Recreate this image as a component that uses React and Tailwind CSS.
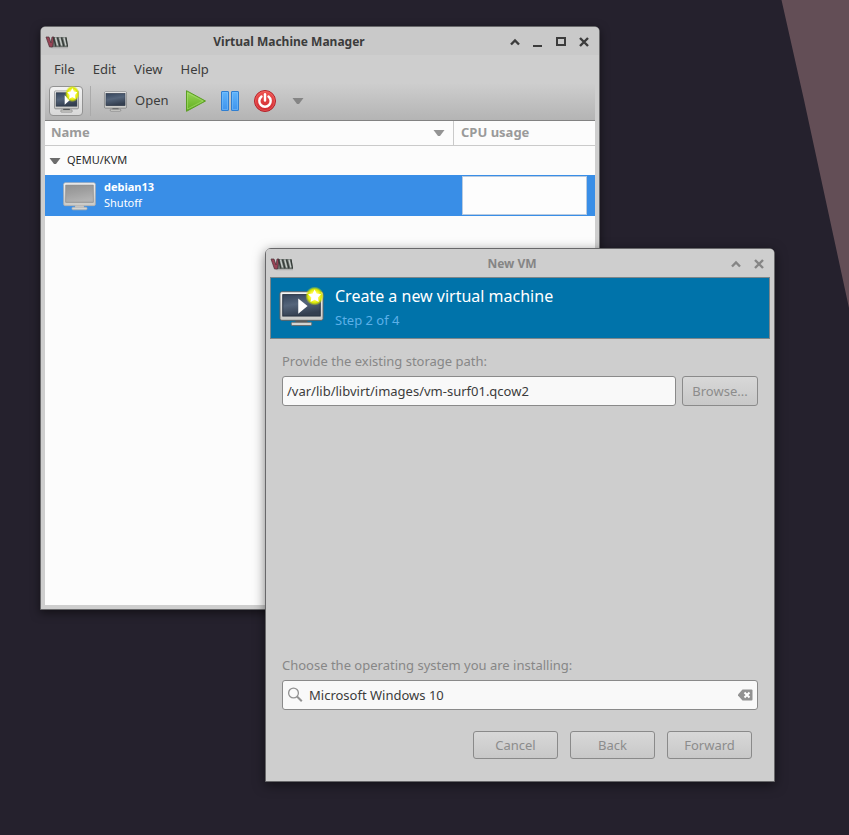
import React from "react";

function LogoVM() {
  return (
    <svg width="24" height="14" viewBox="0 0 24 14" aria-hidden="true">
      <path d="M3 2.500 7 12.500h16" fill="none" stroke="#777" strokeOpacity=".35" strokeWidth="1.500" />
      <path d="M7.500 2h14l1.500 10H7z" fill="#6d736f" />
      <path d="M1 2h3l2 6 1-6h2L7.500 12H4.500z" fill="#9a4456" stroke="#4a3038" strokeWidth=".7" />
      <path d="m8.500 2.500 2.500 9m1.500-9 2.500 9m1.500-9 2.500 9m2-9 1.500 9" stroke="#343a37" strokeWidth="1.200" />
      <path d="m10.500 2.500 2 8m2.200-8 2 8m2.200-8 2 8" stroke="#c9cecb" strokeWidth="1.300" />
    </svg>
  );
}

function Monitor({ id, width, height, play, star, small, off }) {
  return (
    <svg width={width} height={height} viewBox="0 0 48 42" preserveAspectRatio="none" className="overflow-visible" aria-hidden="true">
      <defs>
        <linearGradient id={`${id}-screen`} x1="0" y1="0" x2=".3" y2="1">
          <stop offset="0" stopColor={off ? "#929292" : "#33435a"} />
          <stop offset=".5" stopColor={off ? "#a0a0a0" : "#55657b"} />
          <stop offset="1" stopColor={off ? "#b2b2b2" : "#343f50"} />
        </linearGradient>
        <linearGradient id={`${id}-frame`} x1="0" y1="0" x2="0" y2="1">
          <stop offset="0" stopColor="#f7f7f7" />
          <stop offset="1" stopColor="#c9c9c6" />
        </linearGradient>
        <radialGradient id={`${id}-glow`}>
          <stop offset=".45" stopColor="#fff94a" />
          <stop offset=".72" stopColor="#d9e800" />
          <stop offset="1" stopColor="#d9e800" stopOpacity="0" />
        </radialGradient>
      </defs>
      <path d="M18 34h12l1 5H17z" fill={off ? "#d0d0d0" : "#55585a"} />
      <rect x="13" y="37" width="22" height="3.500" rx="1.500" fill="#d4d4d1" stroke={off ? "#aaa" : "#666"} />
      <rect x="1" y="5" width="46" height="30" rx="2" fill={`url(#${id}-frame)`} stroke={off ? "#b5aea8" : "#5c5e60"} />
      <rect x="4" y="8" width="40" height="22.500" fill={`url(#${id}-screen)`} stroke={off ? "#888" : "#273140"} />
      {play && <path d="M20.500 12v16l10-8z" fill="#fff" />}
      {star && (
        <g transform={small ? "translate(-18 -3.500) scale(1.400)" : undefined}>
          <circle cx="38" cy="9.500" r="10" fill={`url(#${id}-glow)`} />
          <path d="m38 2.500 2.200 4.300 4.800.7-3.500 3.400.9 4.800-4.400-2.300-4.400 2.300.9-4.800L31 7.500l4.800-.7z" fill="#fff" />
        </g>
      )}
    </svg>
  );
}

function PlayIcon() {
  return (
    <svg width="22" height="22" viewBox="0 0 22 22" aria-hidden="true">
      <defs>
        <linearGradient id="go" x1="0" y1="0" x2="0" y2="1">
          <stop offset="0" stopColor="#9ad65a" />
          <stop offset="1" stopColor="#5fae1c" />
        </linearGradient>
      </defs>
      <path d="M1.500 .7v20.600l19-10.300z" fill="url(#go)" stroke="#5a9e22" strokeLinejoin="round" />
      <path d="M2.500 3v16l15.500-8z" fill="none" stroke="#b4e47f" strokeOpacity=".5" />
    </svg>
  );
}

function PauseIcon() {
  return (
    <svg width="20" height="22" viewBox="0 0 20 22" aria-hidden="true">
      <defs>
        <linearGradient id="hold" x1="0" y1="0" x2="0" y2="1">
          <stop offset="0" stopColor="#5fb4fb" />
          <stop offset="1" stopColor="#3f94ee" />
        </linearGradient>
      </defs>
      <g fill="url(#hold)" stroke="#2f7fd2">
        <rect x="1.500" y="1.500" width="7" height="19" rx=".5" />
        <rect x="11.500" y="1.500" width="7" height="19" rx=".5" />
      </g>
      <path d="M2.500 2.500h5v17h-5zM12.500 2.500h5v17h-5z" fill="none" stroke="#8ccbff" strokeOpacity=".4" />
    </svg>
  );
}

function PowerIcon() {
  return (
    <svg width="24" height="24" viewBox="0 0 24 24" aria-hidden="true">
      <defs>
        <linearGradient id="halt" x1="0" y1="0" x2="0" y2="1">
          <stop offset="0" stopColor="#ef5350" />
          <stop offset="1" stopColor="#cf2a32" />
        </linearGradient>
      </defs>
      <circle cx="12" cy="12" r="10.500" fill="url(#halt)" stroke="#b5222b" />
      <circle cx="12" cy="12" r="9.500" fill="none" stroke="#ff8c82" strokeOpacity=".35" />
      <path d="M8.500 7.500a5.700 5.700 0 1 0 7 0" fill="none" stroke="#fff" strokeWidth="2.400" strokeLinecap="round" />
      <path d="M12 5.300v6.200" stroke="#fff" strokeWidth="2.400" strokeLinecap="round" />
    </svg>
  );
}

function Caret({ className }) {
  return (
    <svg width="12" height="8" viewBox="0 0 12 8" className={className} aria-hidden="true">
      <path d="M.5 1h11L7 7H5z" fill="currentColor" />
    </svg>
  );
}

const glyphs = {
  shade: <path d="m2 8.500 4-4 4 4" fill="none" stroke="currentColor" strokeWidth="2.400" />,
  minimize: <path d="M1 9h9v2H1z" fill="currentColor" />,
  maximize: <path d="M2 2h8v7H2z" fill="none" stroke="currentColor" strokeWidth="2" />,
  close: <path d="m2 2 8 8m0-8-8 8" fill="none" stroke="currentColor" strokeWidth="2.400" />,
};

function WindowTitle({ title, active, controls }) {
  return (
    <header
      className={`flex h-7 shrink-0 items-center rounded-t pt-0.5 pr-[9px] pl-1 ${
        active ? "bg-[#c9c9c9] text-[#3c3c3c]" : "bg-[#cecece] text-[#858585]"
      }`}
    >
      <LogoVM />
      <h1 className="flex-1 text-center text-xs font-bold">{title}</h1>
      <div className="flex gap-[11px]">
        {controls.map((name) => (
          <button key={name} type="button" aria-label={name}>
            <svg width="12" height="12" viewBox="0 0 12 12" aria-hidden="true">
              {glyphs[name]}
            </svg>
          </button>
        ))}
      </div>
    </header>
  );
}

function ManagerWindow() {
  return (
    <section className="absolute top-[26px] left-10 flex h-[584px] w-[560px] flex-col rounded-t-md border border-[#68686a] bg-[#cecece] shadow-[0_3px_10px_rgba(0,0,0,0.5)]">
      <WindowTitle title="Virtual Machine Manager" active controls={["shade", "minimize", "maximize", "close"]} />
      <nav className="flex h-7 shrink-0 items-center gap-[18px] pt-0.5 pl-[13px]">
        {["File", "Edit", "View", "Help"].map((name) => (
          <button key={name} type="button">
            {name}
          </button>
        ))}
      </nav>
      <div className="mx-1 flex h-[38px] shrink-0 items-center border-b border-[#828282] bg-linear-to-b from-[#cecece] to-[#b4b4b4] pb-0.5 pl-1">
        <button
          type="button"
          aria-label="Create a new virtual machine"
          className="flex h-[30px] w-[34px] items-center justify-center rounded-sm border border-[#929292] bg-linear-to-b from-[#f2f2f2] to-[#d8d8d8]"
        >
          <Monitor id="new" width={25} height={25} play star small />
        </button>
        <span className="mx-[7px] h-[30px] w-px bg-[#aaaaaa]" />
        <button type="button" className="ml-0.5 flex items-center gap-2 px-1">
          <Monitor id="open" width={23} height={23} />
          Open
        </button>
        <button type="button" aria-label="Run" className="ml-3">
          <PlayIcon />
        </button>
        <button type="button" aria-label="Pause" className="ml-[13px]">
          <PauseIcon />
        </button>
        <button type="button" aria-label="Shut down" className="ml-[13px]">
          <PowerIcon />
        </button>
        <button type="button" aria-label="Shut down options" className="ml-[15px]">
          <Caret className="text-[#858585]" />
        </button>
      </div>
      <div className="mx-1 mb-1 flex-1 bg-[#fcfcfc]">
        <table className="w-full table-fixed border-separate border-spacing-0 text-left">
          <colgroup>
            <col />
            <col className="w-[141px]" />
          </colgroup>
          <thead className="text-[#9a9a9a]">
            <tr className="h-[25px]">
              <th scope="col" className="border-r border-b border-[#cacaca] pr-2 pl-[6px]">
                <div className="flex items-center justify-between">
                  Name
                  <Caret className="text-[#949494]" />
                </div>
              </th>
              <th scope="col" className="border-b border-[#cacaca] pl-[7px]">
                CPU usage
              </th>
            </tr>
          </thead>
          <tbody className="text-[11px]">
            <tr className="h-[29px]">
              <td colSpan={2} className="pl-1">
                <div className="flex items-center gap-[6px] text-[#2a2a2a]">
                  <Caret className="text-[#6c6c6c]" />
                  QEMU/KVM
                </div>
              </td>
            </tr>
            <tr className="h-[41px] bg-[#398ee7] text-white">
              <td className="pb-0.5 pl-[18px]">
                <div className="flex items-center gap-2">
                  <Monitor id="guest" width={33} height={32} off />
                  <div className="leading-4">
                    <div className="font-bold">debian13</div>
                    <div>Shutoff</div>
                  </div>
                </div>
              </td>
              <td className="pr-2 pl-2">
                <div className="h-[39px] border border-[#b9cbe0] bg-[#fdfdfd]" />
              </td>
            </tr>
          </tbody>
        </table>
      </div>
    </section>
  );
}

function DialogButton({ children, className }) {
  return (
    <button
      type="button"
      className={`rounded-[3px] border border-[#8a8a8a] bg-linear-to-b from-[#d8d8d8] to-[#c8c8c8] pt-px text-[#8c8c8c] ${className}`}
    >
      {children}
    </button>
  );
}

function NewVmDialog() {
  return (
    <section className="absolute top-[248px] left-[265px] flex h-[534px] w-[510px] flex-col rounded-t-md border border-[#68686a] bg-[#cecece] shadow-[0_3px_12px_rgba(0,0,0,0.5)]">
      <WindowTitle title="New VM" controls={["shade", "close"]} />
      <div className="mx-1 flex h-[62px] shrink-0 items-center gap-[11px] border border-[#7c868a] bg-[#0073aa] pl-2">
        <div className="pb-0.5">
          <Monitor id="wizard" width={45} height={40} play star />
        </div>
        <div>
          <h2 className="text-base leading-6 text-white">Create a new virtual machine</h2>
          <p className="leading-6 text-[#5cb0e8]">Step 2 of 4</p>
        </div>
      </div>
      <form className="flex flex-1 flex-col px-4 pt-3 pb-[22px]" onSubmit={(e) => e.preventDefault()}>
        <label htmlFor="path" className="leading-5 text-[#878787]">
          Provide the existing storage path:
        </label>
        <div className="mt-[5px] flex gap-[6px]">
          <input
            id="path"
            defaultValue="/var/lib/libvirt/images/vm-surf01.qcow2"
            className="h-[30px] min-w-0 flex-1 rounded-[3px] border border-[#8a8a8a] bg-[#f9f9f9] px-1 text-[#3c3c3c] outline-none"
          />
          <DialogButton className="h-[30px] w-[76px]">Browse...</DialogButton>
        </div>
        <label htmlFor="os" className="mt-auto leading-5 text-[#878787]">
          Choose the operating system you are installing:
        </label>
        <div className="mt-[5px] flex h-[30px] items-center gap-[6px] rounded-[3px] border border-[#8a8a8a] bg-[#f9f9f9] px-1">
          <svg width="16" height="16" viewBox="0 0 16 16" fill="none" stroke="#929292" aria-hidden="true">
            <circle cx="6.500" cy="6" r="4.900" strokeWidth="1.300" />
            <path d="m10 9.500 4.800 4.800" strokeWidth="2" />
          </svg>
          <input
            id="os"
            defaultValue="Microsoft Windows 10"
            className="h-7 min-w-0 flex-1 bg-transparent text-[#3c3c3c] outline-none"
          />
          <button type="button" aria-label="Clear">
            <svg width="16" height="14" viewBox="0 0 16 14" aria-hidden="true">
              <path d="M5.500 1.500h9q1 0 1 1v9q0 1-1 1h-9L1 7.500v-1z" fill="#929292" />
              <path d="m7.500 4.500 5 5m0-5-5 5" stroke="#fff" strokeWidth="2" />
            </svg>
          </button>
        </div>
        <div className="mt-[21px] flex justify-end gap-3 pr-[6px]">
          <DialogButton className="h-7 w-[85px]">Cancel</DialogButton>
          <DialogButton className="h-7 w-[85px]">Back</DialogButton>
          <DialogButton className="h-7 w-[85px]">Forward</DialogButton>
        </div>
      </form>
    </section>
  );
}

export default function App() {
  return (
    <main className="relative min-h-screen overflow-hidden bg-[#25212d] font-['Noto_Sans',sans-serif] text-[13px] text-[#3c3c3c]">
      <svg className="absolute top-0 right-0" width="68" height="310" viewBox="0 0 68 310" aria-hidden="true">
        <path d="M.5 0H68v308L23 100z" fill="#634e56" />
      </svg>
      <ManagerWindow />
      <NewVmDialog />
    </main>
  );
}
